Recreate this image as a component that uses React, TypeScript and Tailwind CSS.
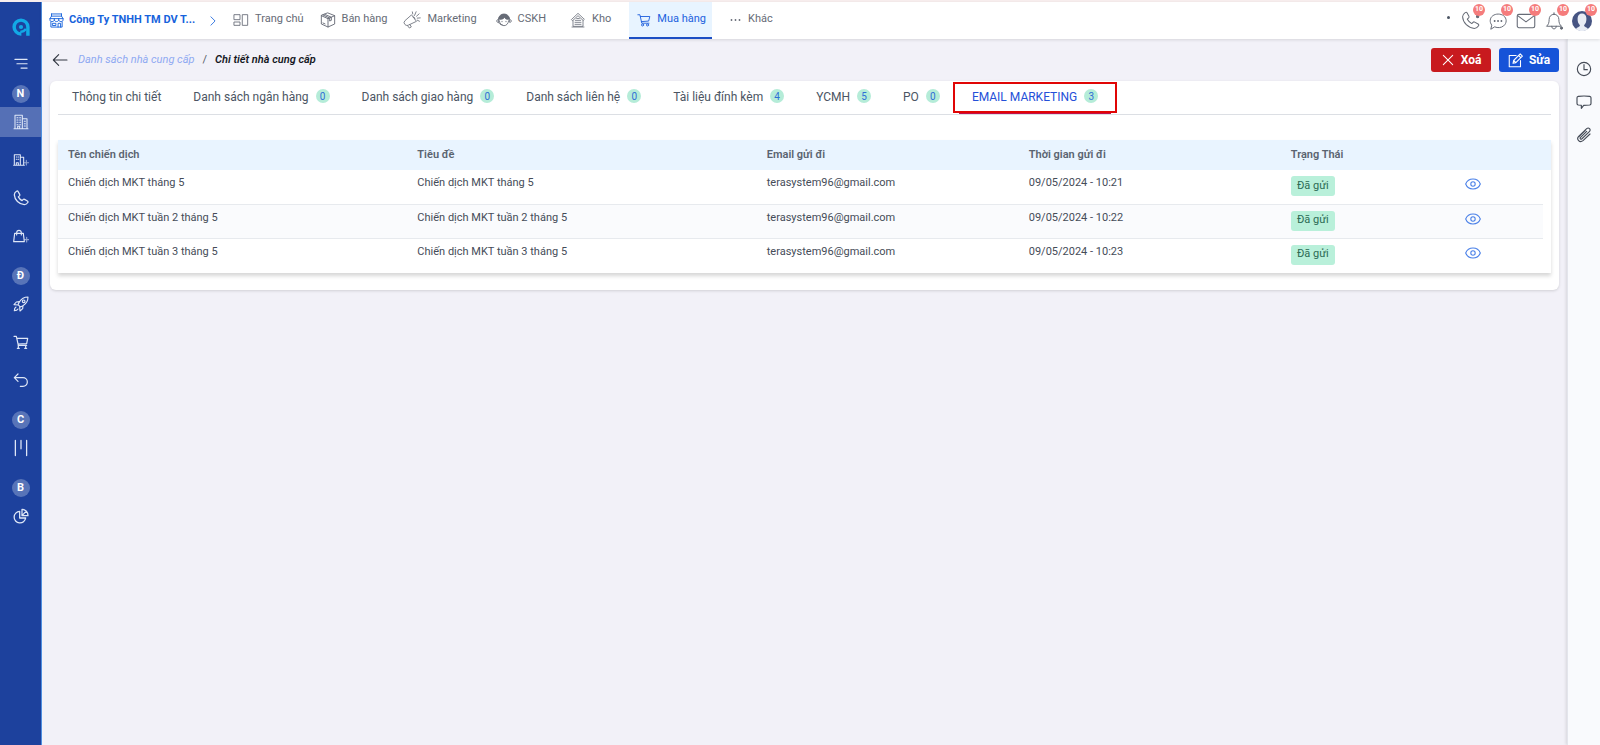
import React from 'react';
import clsx from 'clsx';

interface IconProps {
  className?: string;
  width?: number;
  children: React.ReactNode;
}

const Icon: React.FC<IconProps> = ({ className = 'size-4', width = 1.3, children }) => (
  <svg
    viewBox="0 0 24 24"
    fill="none"
    stroke="currentColor"
    strokeWidth={width}
    strokeLinecap="round"
    strokeLinejoin="round"
    className={clsx('shrink-0', className)}
    aria-hidden="true"
  >
    {children}
  </svg>
);

const PHONE =
  'M7.6 2.2 10 6.6c.4.8.2 1.6-.4 2.2L8 10.3c1.3 2.4 3.1 4.2 5.6 5.6l1.5-1.5c.6-.6 1.5-.8 2.2-.4l4.3 2.4c.9.5 1.1 1.5.6 2.3-1.3 2-3 3.2-5.2 3.3C9 21.5 2.5 14.8 2 7.3c0-2.2 1.2-4 3.3-5.3.8-.5 1.8-.6 2.3.2z';

const StoreIcon = () => (
  <Icon className="size-[15px]" width={1.5}>
    <path d="M4 1.500h16M4 5h16M4 1.500V5L1.500 9h21L20 5V1.500M1.500 9v2c0 1.500 1.500 2.700 3.500 2.700S8.500 12.500 8.500 11V9m0 2c0 1.500 1.500 2.700 3.500 2.700s3.500-1.200 3.500-2.700V9m0 2c0 1.500 1.500 2.700 3.500 2.700s3.500-1.200 3.500-2.700V9M3 14v8.500h18V14M6 16.500h5V20H6zM14.500 22.500v-6h4v6" />
  </Icon>
);

const GridIcon = () => (
  <Icon className="size-4">
    <path d="M2 4h8.500v7.500H2zM2 15h8.500v5H2zM14.500 4h7.500v16h-7.500z" />
  </Icon>
);

const BoxIcon = () => (
  <Icon className="size-4" width={1.4}>
    <path d="M12 1.500 22 5.500v12.500L12 22.500 2 18V5.500zM2 5.500 12 10l10-4.500M12 10v12.500M7 3.500l10 4.300v4.700l-2.500 1V9L4.500 4.500M4.500 16.500l3 1.300" />
  </Icon>
);

const MegaphoneIcon = () => (
  <Icon className="size-[18px]" width={1.1}>
    <path d="M11 5.500 2.500 13a3.600 3.600 0 0 0 .3 5.200c1.300 1.200 3 1.300 4.500.6L17.500 14zM6 19.500l2.500 3.200 2.600-1.500-2-3.200M13.500 8c1.500-.3 2.600 1 2.200 2.500M13 4l-.5-2.800M16 4.500 17.500 1M18 7l3.500-3.200M19 9.500l4-.3M19 12.200l3 1.500M15 6.200l.6-1" />
  </Icon>
);

const SupportIcon = () => (
  <Icon className="size-4" width={1.3}>
    <path
      fill="currentColor"
      d="M3.500 11C4 6 7.500 3 12 3s8 3 8.500 8h-2c-3 0-4.800-1-5.700-2.800C11.500 10 9 11 6 11z"
    />
    <path d="M3 11.500c-1.500 0-2 1-2 2s.5 2 2 2zM21 11.500c1.500 0 2 1 2 2s-.5 2-2 2zM5 13c.5 4.500 3.300 7.500 7 7.500s6.500-3 7-7.500M4 15.500c.7 2.500 2.700 3.700 5.500 3.700M9 14v.6M15 14v.6" />
  </Icon>
);

const WarehouseIcon = () => (
  <Icon className="size-4" width={1.2}>
    <path d="M2.500 11 12 2l9.500 9-1.700 1.700L12 5.500l-7.800 7.200zM4.500 13v8.500h15V13M8 12.500h8M7.500 15.500h9M7.500 18.500h9M10 9.700h4M3 22.500h18" />
  </Icon>
);

const CartIcon: React.FC<{ className?: string; width?: number }> = (props) => (
  <Icon {...props}>
    <path d="M1.500 3H5l3.200 14.500h12.300M5.800 6H22l-2 7.800-12.500 1" />
    <circle cx="9.500" cy="20.500" r="1.800" />
    <circle cx="18" cy="20.500" r="1.800" />
  </Icon>
);

const DotsIcon = () => (
  <Icon className="size-3" width={0}>
    <g fill="currentColor">
      <circle cx="3" cy="12" r="1.800" />
      <circle cx="11" cy="12" r="1.800" />
      <circle cx="19" cy="12" r="1.800" />
    </g>
  </Icon>
);

const Logo = () => (
  <svg viewBox="0 0 24 24" fill="none" stroke="#12a9e6" strokeWidth="4.600" className="size-[18px]" aria-label="Logo">
    <path d="M12.500 21.200H12A9.200 9.200 0 1 1 21.200 12v11.500" />
    <circle cx="12" cy="12" r="2.800" fill="#12a9e6" stroke="none" />
    <path d="M11 18.500c3.500 0 6-1.500 7.500-4" strokeWidth="3" />
  </svg>
);

const EyeIcon = () => (
  <Icon className="size-4" width={1.6}>
    <path d="M1 12c2-5 6-7.500 11-7.500S21 7 23 12c-2 5-6 7.500-11 7.500S3 17 1 12z" />
    <circle cx="12" cy="12" r="3.300" />
  </Icon>
);

interface NavItem {
  label: string;
  icon: React.ReactNode;
  className: string;
  active?: boolean;
}

const navItems: NavItem[] = [
  { label: 'Trang chủ', icon: <GridIcon />, className: 'px-2' },
  { label: 'Bán hàng', icon: <BoxIcon />, className: 'px-2' },
  { label: 'Marketing', icon: <MegaphoneIcon />, className: 'px-2' },
  { label: 'CSKH', icon: <SupportIcon />, className: 'pr-3 pl-[11px]' },
  { label: 'Kho', icon: <WarehouseIcon />, className: 'pr-[18px] pl-3' },
  { label: 'Mua hàng', icon: <CartIcon className="size-3.5" width={1.6} />, className: 'pr-1.5 pl-2', active: true },
  { label: 'Khác', icon: <DotsIcon />, className: 'pl-[18px]' },
];

interface MenuItem {
  label: string;
  icon: React.ReactNode;
  active?: boolean;
}

const menuSections: { letter: string; items: MenuItem[] }[] = [
  {
    letter: 'N',
    items: [
      {
        label: 'Nhà cung cấp',
        active: true,
        icon: (
          <Icon width={1.6}>
            <path d="M3 22V2h11v20M14 7h7v15M1.500 22h21M7 22v-3.500h3V22" />
            <path d="M6 5.500h1.500M10 5.500h1.500M6 9h1.500M10 9h1.500M6 12.500h1.500M10 12.500h1.500M6 16h1.500M10 16h1.500M17 11h1.500M17 14.500h1.500M17 18h1.500" />
          </Icon>
        ),
      },
      {
        label: 'Thêm nhà cung cấp',
        icon: (
          <Icon width={1.6}>
            <path d="M2 20V4h9v16M11 8h5v12M1 20h16M5 20v-4h3v4M5 7.500h1M8 7.500h.5M5 11h1M8 11h.5" />
            <path d="M20 12.500v7M16.500 16h7" opacity=".6" />
          </Icon>
        ),
      },
      {
        label: 'Liên hệ',
        icon: (
          <Icon width={1.9}>
            <path d={PHONE} />
          </Icon>
        ),
      },
      {
        label: 'Thêm sản phẩm',
        icon: (
          <Icon width={1.7}>
            <path d="M2.500 8h13L17 20.500H1zM5.500 10.500V7a3.500 3.500 0 0 1 7 0v3.500" />
            <path d="M20.500 14v7M17.500 17.500h6" opacity=".6" />
          </Icon>
        ),
      },
    ],
  },
  {
    letter: 'Đ',
    items: [
      {
        label: 'Yêu cầu mua hàng',
        icon: (
          <Icon width={1.7}>
            <path d="M22.500 1.500c-6 0-10 2.500-13 7.500l-2 4 3.500 3.500 4-2c5-3 7.500-7 7.500-13zM9.500 8.500 5 9l-3.500 4 5.500.5M15 14.500l-.5 4.500-4 3.500-.5-5.500M4.500 16.500c-2 1-2.500 3-2.500 5.500 2.500 0 4.500-.5 5.500-2.500" />
            <circle cx="16" cy="8" r="2" />
          </Icon>
        ),
      },
      {
        label: 'Đơn mua hàng',
        icon: (
          <Icon width={1.8}>
            <path d="M1.500 3.500H5L8 17h12.500M5.800 6.500H22l-1.500 8-13 .5" />
            <path d="M8 17v3.500M19 17v3.500M6.500 21.500h3M17.500 21.500h3" />
          </Icon>
        ),
      },
      {
        label: 'Trả hàng',
        icon: (
          <Icon width={1.8}>
            <path d="M7.500 3 2 8.500 7.500 14M2 8.500h13a6.500 6.500 0 0 1 0 13h-4" />
          </Icon>
        ),
      },
    ],
  },
  {
    letter: 'C',
    items: [
      {
        label: 'Công việc',
        icon: (
          <Icon className="size-[18px]" width={1.7}>
            <path d="M4.500 2v20M12 2v11M19.500 2v20" />
          </Icon>
        ),
      },
    ],
  },
  {
    letter: 'B',
    items: [
      {
        label: 'Báo cáo',
        icon: (
          <Icon width={1.9}>
            <path d="M10 5a8.700 8.700 0 1 0 9 10h-9z" />
            <path d="M13.500 2v9.500h9A9 9 0 0 0 13.500 2zM13.500 11.500l6-6.500" />
          </Icon>
        ),
      },
    ],
  },
];

const notices = [
  {
    label: 'Cuộc gọi',
    icon: (
      <Icon className="size-[19px]">
        <path d={PHONE} />
        <circle cx="21" cy="7" r="1.500" fill="currentColor" />
      </Icon>
    ),
  },
  {
    label: 'Tin nhắn',
    icon: (
      <Icon className="size-[18px]">
        <path d="M2.500 22.500l1.200-5C.5 13.500 1 8 5 5c4-3 10.500-3 14.500 0 4.500 3.500 4.500 10 0 13.500-3.500 2.700-7.500 3-11.500 1.500z" />
        <path d="M7.500 12h.1M12 12h.1M16.500 12h.1" strokeWidth="2.400" />
      </Icon>
    ),
  },
  {
    label: 'Thư',
    icon: (
      <Icon className="size-5">
        <rect x="1.500" y="4" width="21" height="16" rx="2" />
        <path d="m2 5.500 10 7.500 10-7.500" />
      </Icon>
    ),
  },
  {
    label: 'Thông báo',
    icon: (
      <Icon className="size-[18px]">
        <path d="M12 1v2M12 3c-4 0-6.500 3-6.500 7 0 4.500-1 7-3.500 9h20c-2.500-2-3.500-4.500-3.500-9 0-4-2.500-7-6.500-7zM9 19c0 2 1 3.500 3 3.500s3-1.500 3-3.500" />
        <circle cx="22" cy="21.500" r="1.500" fill="currentColor" />
      </Icon>
    ),
  },
  {
    label: 'Tài khoản',
    icon: (
      <svg viewBox="0 0 24 24" className="size-5" aria-hidden="true">
        <circle cx="12" cy="12" r="12" fill="#465482" />
        <path d="M5 21.500c1-2.500 4.200-2 4.500-4.500C7 15 6.500 11.500 6.800 8c.3-3 2.200-5 5.200-5s5 2 5.200 5c.3 3.500-.2 7-2.700 9 .3 2.500 3.500 2 4.500 4.500-4 3.200-10 3.200-14 0z" fill="#e9edf5" />
      </svg>
    ),
  },
];

interface Tab {
  label: string;
  count?: number;
  active?: boolean;
}

const tabs: Tab[] = [
  { label: 'Thông tin chi tiết' },
  { label: 'Danh sách ngân hàng', count: 0 },
  { label: 'Danh sách giao hàng', count: 0 },
  { label: 'Danh sách liên hệ', count: 0 },
  { label: 'Tài liệu đính kèm', count: 4 },
  { label: 'YCMH', count: 5 },
  { label: 'PO', count: 0 },
  { label: 'EMAIL MARKETING', count: 3, active: true },
];

const campaigns = [
  { name: 'Chiến dịch MKT tháng 5', email: 'terasystem96@gmail.com', time: '09/05/2024 - 10:21', status: 'Đã gửi' },
  { name: 'Chiến dịch MKT tuần 2 tháng 5', email: 'terasystem96@gmail.com', time: '09/05/2024 - 10:22', status: 'Đã gửi' },
  { name: 'Chiến dịch MKT tuần 3 tháng 5', email: 'terasystem96@gmail.com', time: '09/05/2024 - 10:23', status: 'Đã gửi' },
];

const Sidebar = () => (
  <nav className="flex w-[42px] shrink-0 flex-col items-center border-r border-[#4f8fe0] bg-[#1d419d] pt-4 text-[#dfe7f7]">
    <Logo />
    <button aria-label="Menu" className="mt-4 mb-1 flex h-6 items-center">
      <Icon className="size-[14px]" width={1.9}>
        <path d="M1.500 4h21M5 11.500h17.500M12 19h10.500" />
      </Icon>
    </button>
    {menuSections.map((section, index) => (
      <div key={section.letter} className={clsx('flex w-full flex-col items-center', index === 0 ? 'mt-[5px]' : 'mt-4')}>
        <span className="mb-1 flex size-[18px] items-center justify-center rounded-full bg-[#5874b8] text-[11px] font-bold text-white">
          {section.letter}
        </span>
        <div className="flex w-full flex-col gap-2">
          {section.items.map((item) => (
            <a
              key={item.label}
              href="#"
              aria-label={item.label}
              className={clsx('flex h-[30px] w-full items-center justify-center', item.active && 'bg-[#5570b6]')}
            >
              {item.icon}
            </a>
          ))}
        </div>
      </div>
    ))}
  </nav>
);

const Header = () => (
  <header className="z-10 flex h-[37px] shrink-0 items-stretch bg-white pr-2 pl-[7px] text-[11px] text-[#666b76] shadow-[0_1px_3px_rgba(0,0,0,0.12)]">
    <a href="#" className="flex w-[169px] items-center gap-[5px] font-bold text-[#1763dc]">
      <StoreIcon />
      <span>Công Ty TNHH TM DV T...</span>
      <Icon className="ml-auto size-2.5" width={2}>
        <path d="m7 2 10 10L7 22" />
      </Icon>
    </a>
    <div className="ml-[7px] flex items-stretch">
      {navItems.map((item) => (
        <a
          key={item.label}
          href="#"
          className={clsx(
            'flex items-center gap-1.5 border-b-2',
            item.className,
            item.active ? 'border-[#1c4fc4] bg-[#e8f4ff] text-[#2262de]' : 'border-transparent',
          )}
        >
          {item.icon}
          {item.label}
        </a>
      ))}
    </div>
    <div className="ml-auto flex items-center gap-2">
      <span className="mr-0.5 mb-1.5 size-[3px] rounded-full bg-[#4b5563]" />
      {notices.map((notice) => (
        <button key={notice.label} aria-label={notice.label} className="relative flex size-5 items-center justify-center">
          {notice.icon}
          <span className="absolute -top-[7px] -right-[5px] flex size-3 items-center justify-center rounded-full bg-[#f57c7c] text-[7px] font-bold text-white">
            10
          </span>
        </button>
      ))}
    </div>
  </header>
);

const Tabs = () => (
  <div role="tablist" className="flex h-[34px] gap-1.5 border-b border-[#dcdfe4] pl-px text-[12px] text-[#4b5563]">
    {tabs.map((tab) => (
      <button
        key={tab.label}
        role="tab"
        aria-selected={!!tab.active}
        className={clsx(
          'relative flex items-center gap-[7px] border-b-3 px-[13px] pt-0.5',
          tab.active ? 'border-[#c4104a] text-[#2450d8]' : 'border-transparent',
        )}
      >
        {tab.label}
        {tab.count !== undefined && (
          <span className="mb-0.5 flex size-3.5 items-center justify-center rounded-full bg-[#b5ecd8] text-[10px] text-[#2f6fd6]">
            {tab.count}
          </span>
        )}
        {tab.active && <span className="absolute -inset-x-1.5 top-px -bottom-0.5 border-2 border-[#e00505]" />}
      </button>
    ))}
  </div>
);

const CampaignTable = () => (
  <table className="mt-[25px] w-full table-fixed text-left text-[11px] text-[#454c58] shadow-[0_3px_4px_rgba(0,0,0,0.16)]">
    <thead className="bg-[#e9f4ff] text-[#5a6370]">
      <tr className="h-[30px]">
        <th className="w-[23.4%] px-2.5 font-semibold">Tên chiến dịch</th>
        <th className="w-[23.4%] px-2.5 font-semibold">Tiêu đề</th>
        <th className="w-[17.55%] px-2.5 font-semibold">Email gửi đi</th>
        <th className="w-[17.55%] px-2.5 font-semibold">Thời gian gửi đi</th>
        <th className="w-[8.2%] px-2.5 font-semibold">Trạng Thái</th>
        <th aria-label="Xem" />
        <th className="w-2" />
      </tr>
    </thead>
    <tbody>
      {campaigns.map((row, index) => (
        <tr
          key={row.name}
          className="h-[34px] align-top [&>td:not(:last-child)]:border-b [&>td]:border-[#e7eaee] last:[&>td]:border-transparent"
        >
          {[row.name, row.name, row.email, row.time].map((text, col) => (
            <td key={col} className={clsx('px-2.5 pt-[5px]', index % 2 === 1 && 'bg-[#fafbfd]')}>
              {text}
            </td>
          ))}
          <td className={clsx('px-2.5 pt-1.5', index % 2 === 1 && 'bg-[#fafbfd]')}>
            <span className="flex h-5 w-11 items-center justify-center rounded-[3px] bg-[#b9f0da] text-[#2c6b55]">
              {row.status}
            </span>
          </td>
          <td className={clsx('pt-1.5', index % 2 === 1 && 'bg-[#fafbfd]')}>
            <button aria-label="Xem chi tiết" className="mx-auto block text-[#4a80e8]">
              <EyeIcon />
            </button>
          </td>
          <td />
        </tr>
      ))}
    </tbody>
  </table>
);

const App: React.FC = () => {
  return (
    <div className="flex min-h-screen border-t-2 border-[#f8eeee] bg-[#f2f1f8] font-['Roboto',sans-serif]">
      <Sidebar />
      <div className="flex min-w-0 flex-1 flex-col">
        <Header />
        <div className="flex flex-1">
          <main className="min-w-0 flex-1 px-2">
            <div className="flex h-[42px] items-center text-[11px]">
              <a href="#" aria-label="Quay lại" className="mr-2.5 ml-0.5 text-[#333843]">
                <Icon width={1.6}>
                  <path d="M22.500 12H2M10 4l-8 8 8 8" />
                </Icon>
              </a>
              <a href="#" className="text-[#8fa9f2] italic">
                Danh sách nhà cung cấp
              </a>
              <span className="mx-2 text-[#555b66]">/</span>
              <span className="font-semibold text-[#15181f] italic">Chi tiết nhà cung cấp</span>
              <div className="ml-auto flex gap-2 text-[12px] font-bold text-white">
                <button className="flex h-6 w-[60px] items-center justify-center gap-1.5 rounded-[3px] bg-[#c81a1e]">
                  <Icon className="size-3.5" width={1.8}>
                    <path d="m4 4 16 16M20 4 4 20" />
                  </Icon>
                  Xoá
                </button>
                <button className="flex h-6 w-[60px] items-center justify-center gap-1.5 rounded-[3px] bg-[#1653d8]">
                  <Icon className="size-[15px]" width={1.7}>
                    <path d="M13 4H2v18h18V12M8 16.500l1-4.500L19.500 1.500 23 5 12.500 15.500zM17 4l3.500 3.500M9 12l3.500 3.500" />
                  </Icon>
                  Sửa
                </button>
              </div>
            </div>
            <section className="rounded-md bg-white px-2 pb-[17px] shadow-[0_1px_3px_rgba(0,0,0,0.14)]">
              <Tabs />
              <CampaignTable />
            </section>
          </main>
          <aside className="flex w-[33px] flex-col items-center gap-[17px] border-l border-[#e3e5ec] bg-[#f9fafd] pt-[22px] text-[#454b57] shadow-[-1px_0_3px_rgba(0,0,0,0.12)]">
            <button aria-label="Lịch sử">
              <Icon width={1.7}>
                <circle cx="12" cy="12" r="10" />
                <path d="M12 5.500V13h5" />
              </Icon>
            </button>
            <button aria-label="Bình luận">
              <Icon width={1.7}>
                <path d="M3.500 3.500c6-.8 11-.8 17 0 1.300.2 2 1 2 2.200v8.600c0 1.200-.7 2-2 2.200-3 .3-6 .5-9 .5L8 21.500v-4.700l-4.500-.3c-1.300-.2-2-1-2-2.200V5.700c0-1.200.7-2 2-2.200z" />
              </Icon>
            </button>
            <button aria-label="Tệp đính kèm">
              <Icon width={1.7}>
                <path d="M16 6.500 6.500 16c-1 1.200.7 3 2 2L20 7c3-3.500-1-7-4-4.500L4 14c-4 4.500 1.500 10.500 6.500 6.500L21 10.500M14 5 4.500 14.500" />
              </Icon>
            </button>
          </aside>
        </div>
      </div>
    </div>
  );
};

export default App;
